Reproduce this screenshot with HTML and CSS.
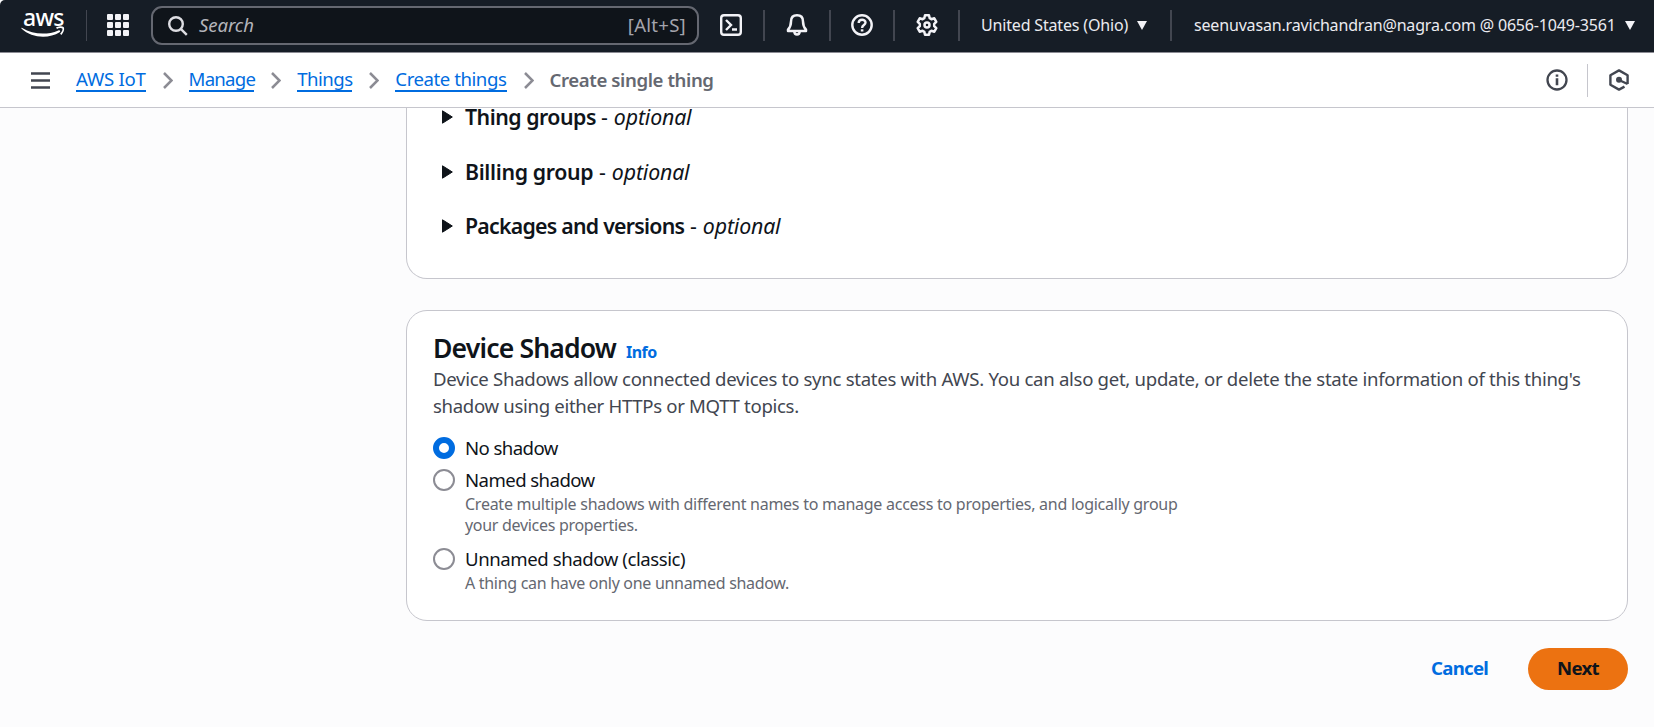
FILE: index.html
```html
<!DOCTYPE html>
<html lang="en">
<head>
<meta charset="utf-8">
<title>Create single thing</title>
<link rel="stylesheet" href="styles.css">
</head>
<body>
<div class="page">
  <header class="topnav">
    <div class="logo"><span class="logo-text">aws</span>
      <svg class="logo-smile" width="44" height="12" viewBox="0 0 44 12"><path d="M1.200.9C12 7.600 26 8.400 37.300 3.400 38.900 2.700 40 4.200 38.600 5.200 28 12 10.500 11.200.6 1.800.1 1.200.6.600 1.200.9z" fill="#fff"/><path d="M35.500 1.300C37.500-.1 41-.1 42 .7c.8 1.500-.3 4.600-2.300 6.600" fill="none" stroke="#fff" stroke-width="1.800"/></svg>
    </div>
    <i class="sep sep-a"></i>
    <svg class="grid-icon" width="22" height="22" viewBox="0 0 22 22" fill="#f3f3f7"><rect width="6" height="6" rx="1"/><rect x="8" width="6" height="6" rx="1"/><rect x="16" width="6" height="6" rx="1"/><rect y="8" width="6" height="6" rx="1"/><rect x="8" y="8" width="6" height="6" rx="1"/><rect x="16" y="8" width="6" height="6" rx="1"/><rect y="16" width="6" height="6" rx="1"/><rect x="8" y="16" width="6" height="6" rx="1"/><rect x="16" y="16" width="6" height="6" rx="1"/></svg>
    <div class="search">
      <svg width="20" height="20" viewBox="0 0 20 20" fill="none" stroke="#dedee3" stroke-width="2.400"><circle cx="8" cy="8" r="6.800"/><path d="M12.800 12.800l6 6"/></svg>
      <span class="search-hint">Search</span><span class="search-key">[Alt+S]</span>
    </div>
    <svg class="ic-shell" width="22" height="22" viewBox="0 0 22 22" fill="none" stroke="#f3f3f7" stroke-width="2.400"><rect x="1.200" y="1.200" width="19.600" height="19.600" rx="2.800"/><path d="M6 6l5 5-5 5M12 15.500h5"/></svg>
    <i class="sep sep-b"></i>
    <svg class="ic-bell" width="22" height="22" viewBox="0 0 22 22" fill="none" stroke="#f3f3f7" stroke-width="2.500" stroke-linejoin="round"><path d="M11 1.300c-4 0-6 2.700-6 6.200 0 4-.8 5.800-3 8.200v1.300h18v-1.300c-2.200-2.400-3-4.200-3-8.200 0-3.500-2-6.200-6-6.200z"/><path d="M8.300 17.500c.2 4 5.200 4 5.400 0"/></svg>
    <i class="sep sep-c"></i>
    <svg class="ic-help" width="22" height="22" viewBox="0 0 22 22" fill="none" stroke="#f3f3f7" stroke-width="2.400"><circle cx="11" cy="11" r="9.700"/><path d="M7.700 9C7.700 4.600 14.500 4.800 14.500 8.600 14.500 11.100 11.100 11 11.100 14"/><path d="M11.100 15.300v2.200" stroke-width="2.600"/></svg>
    <i class="sep sep-d"></i>
    <svg class="ic-gear" width="22" height="22" viewBox="0 0 22 22" fill="none" stroke="#f3f3f7" stroke-width="2.500" stroke-linejoin="round"><path d="M9 1.300h4l.7 2.900 1.700 1 2.900-.9 2 3.500-2.100 2v2.400l2.100 2-2 3.500-2.900-.9-1.700 1-.7 2.900H9l-.7-2.900-1.700-1-2.900.9-2-3.500 2.100-2V9.800l-2.100-2 2-3.500 2.900.9 1.700-1z"/><circle cx="11" cy="11" r="2.500"/></svg>
    <i class="sep sep-e"></i>
    <span class="region">United States (Ohio)</span>
    <svg class="caret" width="10" height="9" viewBox="0 0 10 9"><path d="M0 0h10L5 9z" fill="#f3f3f7"/></svg>
    <i class="sep sep-f"></i>
    <span class="account">seenuvasan.ravichandran@nagra.com @ 0656-1049-3561</span>
    <svg class="caret" width="10" height="9" viewBox="0 0 10 9"><path d="M0 0h10L5 9z" fill="#f3f3f7"/></svg>
  </header>
  <nav class="crumbs">
    <svg class="menu" width="19" height="17" viewBox="0 0 19 17" stroke="#424650" stroke-width="2.500"><path d="M0 1.500h19M0 8.500h19M0 15.500h19"/></svg>
    <a class="crumb c1">AWS IoT</a>
    <svg class="chev" width="10" height="17" viewBox="0 0 10 17"><path d="M1 1l7.500 7.500L1 16"/></svg>
    <a class="crumb c2">Manage</a>
    <svg class="chev" width="10" height="17" viewBox="0 0 10 17"><path d="M1 1l7.500 7.500L1 16"/></svg>
    <a class="crumb c3">Things</a>
    <svg class="chev" width="10" height="17" viewBox="0 0 10 17"><path d="M1 1l7.500 7.500L1 16"/></svg>
    <a class="crumb c4">Create things</a>
    <svg class="chev" width="10" height="17" viewBox="0 0 10 17"><path d="M1 1l7.500 7.500L1 16"/></svg>
    <span class="current">Create single thing</span>
    <div class="tools">
      <svg width="22" height="22" viewBox="0 0 22 22" fill="none" stroke="#424650" stroke-width="2.300"><circle cx="11" cy="11" r="9.500"/><path d="M11 5.500v2.300M11 9.300v7" stroke-width="2.600"/></svg>
      <i class="tool-sep"></i>
      <svg width="20" height="22" viewBox="0 0 20 22" fill="none" stroke="#424650" stroke-width="2.400" stroke-linejoin="round"><path d="M18.600 15V6.200L10 1.400 1.400 6.200v9.600L10 20.600l5.500-3M10 11l8.600 4"/><circle cx="10" cy="10.800" r="3" fill="#424650" stroke="none"/></svg>
    </div>
  </nav>
  <main class="content">
    <section class="card card-options">
      <div class="expand"><svg width="11" height="14" viewBox="0 0 11 14"><path d="M.5.8v12.400L10.300 7z"/></svg><b class="e1">Thing groups</b><span class="dash">-</span><em>optional</em></div>
      <div class="expand"><svg width="11" height="14" viewBox="0 0 11 14"><path d="M.5.8v12.400L10.300 7z"/></svg><b class="e2">Billing group</b><span class="dash">-</span><em>optional</em></div>
      <div class="expand"><svg width="11" height="14" viewBox="0 0 11 14"><path d="M.5.8v12.400L10.300 7z"/></svg><b class="e3">Packages and versions</b><span class="dash">-</span><em>optional</em></div>
    </section>
    <section class="card card-shadow">
      <div class="title"><h2>Device Shadow</h2><a class="info">Info</a></div>
      <p class="desc"><span class="d1">Device Shadows allow connected devices to sync states with AWS. You can also get, update, or delete the state information of this thing's</span><br><span class="d2">shadow using either HTTPs or MQTT topics.</span></p>
      <div class="option o1"><i class="radio on"></i><span class="label l1">No shadow</span></div>
      <div class="option o2"><i class="radio"></i><div><span class="label l2">Named shadow</span><p class="hint"><span class="h1">Create multiple shadows with different names to manage access to properties, and logically group</span><br><span class="h2">your devices properties.</span></p></div></div>
      <div class="option o3"><i class="radio"></i><div><span class="label l3">Unnamed shadow (classic)</span><p class="hint"><span class="h3">A thing can have only one unnamed shadow.</span></p></div></div>
    </section>
    <div class="actions"><a class="cancel">Cancel</a><a class="next">Next</a></div>
  </main>
</div>
</body>
</html>
```
FILE: styles.css
```css
* { box-sizing: border-box; }
body { margin: 0; background: #fcfcfd; font-family: "Noto Sans", sans-serif; color: #0f141a; }
.page { width: 1654px; height: 727px; overflow: hidden; display: flex; flex-direction: column; background: #fcfcfd; }
svg { display: block; flex: none; }
span, b, a, em, h2 { white-space: nowrap; }

.topnav { height: 53px; flex: none; display: flex; align-items: center; background: #161d26; border-bottom: 1px solid #8c8c94; border-top-left-radius: 5px; padding: 0 0 2px 21px; color: #ebebf0; }
.logo { width: 65px; height: 28px; display: flex; flex-direction: column; flex: none; }
.logo-text { height: 17px; line-height: 12px; font-size: 23px; font-weight: 500; color: #fff; padding-left: 2px; letter-spacing: -0.7px; }
.logo-smile { height: 12px; overflow: visible; }
.sep { width: 2px; height: 31px; background: #424650; flex: none; }
.sep-a { width: 1px; }
.grid-icon { margin-left: 20px; }
.search { margin: 1px 0 0 22px; width: 548px; height: 39px; flex: none; border: 2px solid #656871; border-radius: 11px; background: #0f141a; display: flex; align-items: center; padding: 0 11px 0 15px; font-size: 18.600px; line-height: 30px; }
.search-hint { margin: 0 0 2px 11px; font-style: italic; color: #b4b4bb; letter-spacing: -0.1px; }
.search-key { margin: 0 0 2px auto; color: #a4a4ad; letter-spacing: 0.25px; }
.ic-shell, .ic-bell, .ic-gear { margin-left: 21px; }
.ic-help { margin-left: 20px; }
.sep-b, .sep-c { margin-left: 21px; }
.sep-d, .sep-e { margin-left: 20px; }
.region { margin-left: 21px; width: 146px; font-size: 16px; letter-spacing: -0.17px; }
.caret { margin: 1px 0 0 10px; }
.sep-f { margin-left: 23px; }
.account { margin-left: 22px; width: 421px; font-size: 16px; letter-spacing: -0.17px; }

.crumbs { height: 55px; flex: none; background: #fff; border-bottom: 1px solid #c6c6cd; display: flex; align-items: center; padding-left: 31px; font-size: 18.600px; }
.menu { margin-right: 26px; }
.crumb { color: #006ce0; height: 23px; line-height: 20px; border-bottom: 2px solid #006ce0; flex: none; margin-top: 1px; }
.c1 { width: 69.700px; letter-spacing: -0.25px; }
.c2 { width: 65.700px; letter-spacing: -0.75px; }
.c3 { width: 55.300px; letter-spacing: -0.5px; }
.c4 { width: 111.300px; letter-spacing: -0.45px; }
.chev { margin: 0 16px 0 16.900px; fill: none; stroke: #8c8c94; stroke-width: 2.500px; }
.current { font-weight: 600; color: #656871; line-height: 22px; letter-spacing: -0.4px; margin-bottom: 1px; }
.tools { margin-left: auto; padding-right: 25px; display: flex; align-items: center; }
.tool-sep { width: 1px; height: 33px; background: #c6c6cd; margin: 0 21px 0 19px; }

.content { padding-left: 406px; width: 1628px; flex: 1; display: flex; flex-direction: column; min-height: 0; }
.card { background: #fff; border: 1px solid #c6c6cd; flex: none; }
.card-options { height: 171px; border-top: 0; border-radius: 0 0 21px 21px; padding: 0 0 0 35px; }
.expand { display: flex; align-items: center; height: 54.500px; font-size: 21.300px; line-height: 28px; }
.expand:first-child { height: 36.400px; padding-bottom: 18.400px; }
.expand b { margin-left: 12px; font-weight: 600; }
.expand svg { fill: #0f141a; stroke: #0f141a; stroke-linejoin: round; }
.expand em { letter-spacing: -0.15px; }
.dash { margin: 0 6px; }
.e1 { width: 130px; letter-spacing: -0.5px; }
.e2 { width: 128px; letter-spacing: -0.35px; }
.e3 { width: 219px; letter-spacing: -0.75px; }

.card-shadow { margin-top: 31px; height: 311px; border-radius: 21px; padding: 21px 26px 0; }
.title { display: flex; align-items: baseline; height: 34px; line-height: 33px; }
h2 { margin: 0; font-size: 26.600px; width: 193px; font-weight: 600; letter-spacing: -0.85px; }
.info { font-size: 16px; font-weight: 700; color: #006ce0; letter-spacing: -0.5px; }
.desc { margin: 0; font-size: 18.600px; line-height: 26.600px; color: #424650; }
.d1 { letter-spacing: -0.3px; }
.d2 { letter-spacing: -0.33px; }
.option { display: flex; font-size: 18.600px; line-height: 26px; }
.o1 { margin-top: 16px; height: 32px; }
.o2 { height: 79px; }
.radio { width: 22px; height: 22px; border: 2.500px solid #8c8c94; border-radius: 50%; margin: 2px 10px 0 0; flex: none; }
.radio.on { border: 6.500px solid #006ce0; }
.label { display: block; }
.l1, .l2 { letter-spacing: -0.57px; }
.l3 { letter-spacing: -0.43px; }
.hint { margin: 1px 0 0; font-size: 16px; line-height: 21.300px; color: #656871; }
.h1 { letter-spacing: -0.26px; }
.h2, .h3 { letter-spacing: -0.3px; }
.actions { margin-top: 27px; height: 42px; display: flex; justify-content: flex-end; align-items: center; font-size: 18.600px; font-weight: 700; }
.cancel { color: #006ce0; width: 57px; margin: 0 40px 3px 0; letter-spacing: -0.7px; }
.next { width: 100px; height: 42px; line-height: 40px; border-radius: 22px; background: #ec7211; text-align: center; letter-spacing: -0.7px; }
```
